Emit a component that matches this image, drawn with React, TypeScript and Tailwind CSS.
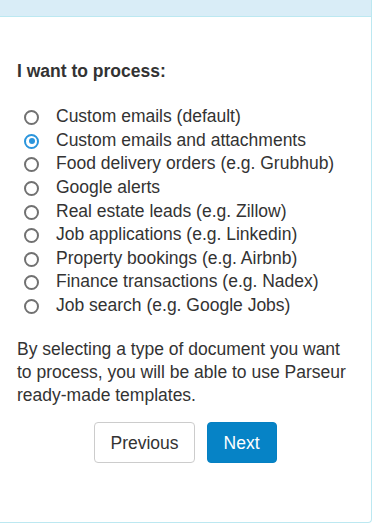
const options = [
  'Custom emails (default)',
  'Custom emails and attachments',
  'Food delivery orders (e.g. Grubhub)',
  'Google alerts',
  'Real estate leads (e.g. Zillow)',
  'Job applications (e.g. Linkedin)',
  'Property bookings (e.g. Airbnb)',
  'Finance transactions (e.g. Nadex)',
  'Job search (e.g. Google Jobs)',
];

function Radio({ checked }: { checked: boolean }) {
  if (checked) {
    return (
      <span className="flex h-[15px] w-[15px] shrink-0 items-center justify-center rounded-full border-2 border-[#2b95dc]">
        <span className="h-[6px] w-[6px] rounded-full bg-[#2b95dc]" />
      </span>
    );
  }
  return <span className="h-[15px] w-[15px] shrink-0 rounded-full border-2 border-[#717171]" />;
}

export default function App() {
  const selected = 1;

  return (
    <div className="h-[525px] bg-white font-['Liberation_Sans',Arial,sans-serif] text-[17.5px] text-[#333]">
      <div className="flex h-[523px] w-[372px] flex-col rounded-br-[4px] border-r border-b border-[#bce8f1]">
        {/* panel heading */}
        <div className="h-[17px] border-b border-[#bce8f1] bg-[#d9edf7]" />

        <div className="px-[17px] pt-[43px]">
          <h3 className="text-[17.5px] font-bold leading-[23px]">I want to process:</h3>

          <ul className="mt-[22px]">
            {options.map((label, i) => (
              <li key={label} className="flex h-[23.6px] items-center">
                <span className="ml-[7px] mt-[2px] flex">
                  <Radio checked={i === selected} />
                </span>
                <span className="ml-[17px] leading-[23px]">{label}</span>
              </li>
            ))}
          </ul>

          <p className="mt-[21px] leading-[23px]">
            By selecting a type of document you want to process, you will be able to use Parseur
            ready-made templates.
          </p>

          <div className="mt-[15px] flex justify-center gap-3">
            <button className="h-[41px] rounded-[4px] border border-[#ccc] bg-white px-[15px] text-[17.5px] text-[#333]">
              Previous
            </button>
            <button className="h-[41px] rounded-[4px] border border-[#0580c2] bg-[#0683c6] px-[16px] text-[17.5px] text-white">
              Next
            </button>
          </div>
        </div>
      </div>
    </div>
  );
}
